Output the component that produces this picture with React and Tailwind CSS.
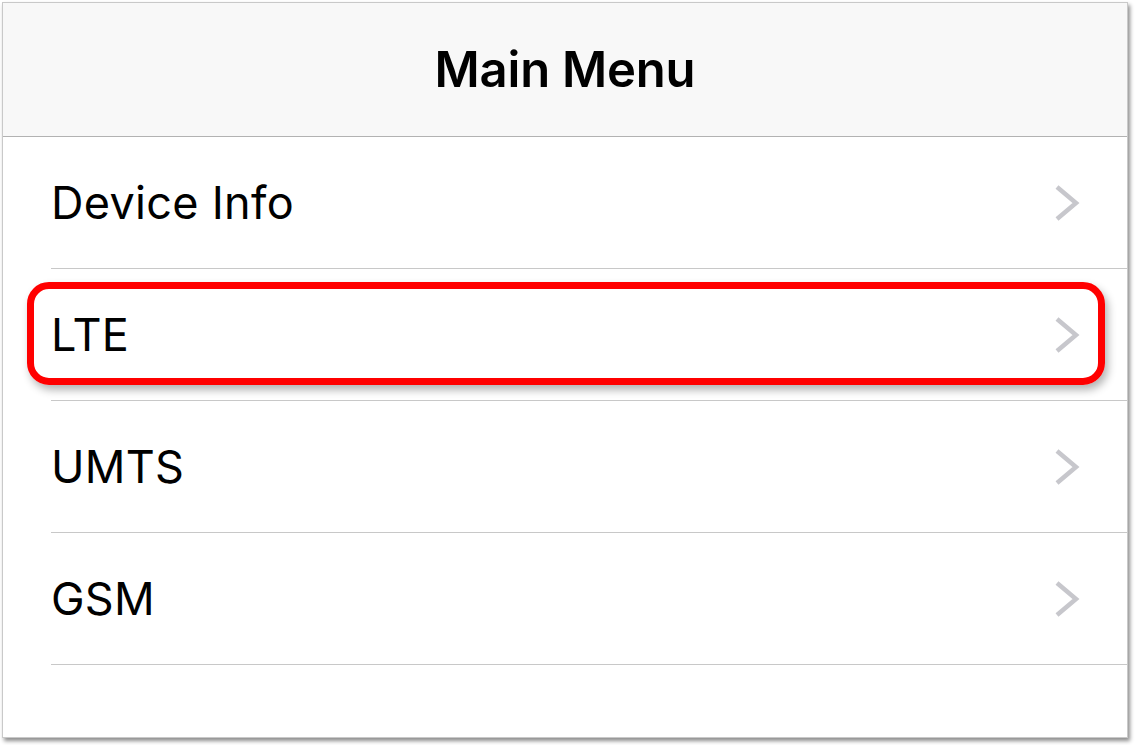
const items = ['Device Info', 'LTE', 'UMTS', 'GSM'];

function Chevron() {
  return (
    <svg width="26" height="38" viewBox="0 0 26 38" fill="none" className="shrink-0">
      <polyline points="3,3 22,19 3,35" stroke="#c7c7cc" strokeWidth="4.5" strokeLinejoin="miter" />
    </svg>
  );
}

function Row({ label, highlighted }) {
  return (
    <div className="relative ml-[48px] h-[132px] flex items-center justify-between border-b border-[#c8c8c8] pr-[47px]">
      <span className="text-[45px] tracking-[0.3px] text-black">{label}</span>
      <Chevron />
      {highlighted && (
        <div className="absolute left-[-24px] right-[22px] top-[13px] h-[103px] rounded-[22px] border-[7px] border-[#ff0000] shadow-[3px_5px_8px_rgba(0,0,0,0.3)]" />
      )}
    </div>
  );
}

export default function App() {
  return (
    <div className="w-[1135px] h-[745px] bg-white pl-[2px] pt-[2px]" style={{ fontFamily: 'Inter, "Noto Sans", sans-serif' }}>
      <div className="w-[1126px] h-[736px] bg-white border border-[#c9c9c9] shadow-[2px_3px_4px_rgba(0,0,0,0.45)] overflow-hidden">
        <header className="h-[134px] bg-[#f8f8f8] border-b border-[#b2b2b2] flex items-center justify-center">
          <h1 className="text-[49px] font-semibold text-black tracking-[-0.2px]">Main Menu</h1>
        </header>
        {items.map((label) => (
          <Row key={label} label={label} highlighted={label === 'LTE'} />
        ))}
      </div>
    </div>
  );
}
